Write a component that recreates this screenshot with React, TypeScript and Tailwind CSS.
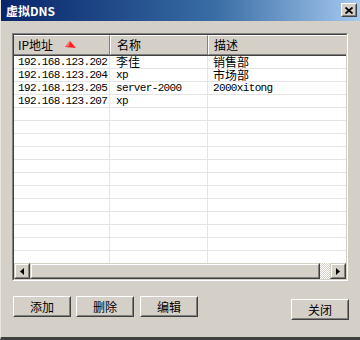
import React from "react";

const rows = [
  ["192.168.123.202", "李佳", "销售部"],
  ["192.168.123.204", "xp", "市场部"],
  ["192.168.123.205", "server-2000", "2000xitong"],
  ["192.168.123.207", "xp", ""],
];

const FONT = { fontFamily: '"Liberation Mono", "Noto Sans CJK SC", monospace' };
const CJK = { fontFamily: '"Noto Sans CJK SC", "Liberation Sans", sans-serif' };

function Cell({ text }: { text: string }) {
  const isCjk = /[\u4e00-\u9fff]/.test(text);
  return (
    <div className="flex-1 h-full flex items-center whitespace-nowrap">
      {isCjk ? (
        <span className="text-[12px] leading-[12px] text-black" style={CJK}>{text}</span>
      ) : (
        <span className="text-[11px] tracking-[-0.65px] leading-[12px] text-black" style={FONT}>{text}</span>
      )}
    </div>
  );
}

function Btn({ label, extra }: { label: string; extra?: string }) {
  return (
    <div className={`w-[58px] h-[21px] border border-t-white border-l-white border-b-[#404040] border-r-[#404040] ${extra ?? ""}`}>
      <div className="w-full h-full border border-t-[#d4d0c8] border-l-[#d4d0c8] border-b-[#808080] border-r-[#808080] flex items-center justify-center">
        <span className="text-[12px] leading-none text-black" style={CJK}>{label}</span>
      </div>
    </div>
  );
}

function ScrollBtn({ dir }: { dir: "l" | "r" }) {
  return (
    <div className="w-[16px] h-full border border-t-[#d4d0c8] border-l-[#d4d0c8] border-b-[#404040] border-r-[#404040]">
      <div className="w-full h-full border border-t-white border-l-white border-b-[#808080] border-r-[#808080] flex items-center justify-center">
        <svg width="4" height="7" viewBox="0 0 4 7">
          {dir === "l" ? <path d="M4 0 L0 3.5 L4 7 Z" fill="#000" /> : <path d="M0 0 L4 3.5 L0 7 Z" fill="#000" />}
        </svg>
      </div>
    </div>
  );
}

export default function App() {
  const bodyRows = [...rows, ...Array.from({ length: 14 }, () => ["", "", ""])];
  return (
    <div className="w-[360px] h-[340px] bg-[#d4d0c8] flex flex-col overflow-hidden border-b-[3px] border-b-[#404040] border-l border-l-[#e8e6e0]">
      {/* title bar */}
      <div className="h-[21px] shrink-0 bg-linear-to-r from-[#0a246a] via-[#3a6ea5] via-60% to-[#a6caf0] flex items-center pl-[5px] pr-[3px]">
        <span className="text-white font-bold text-[12px] leading-none" style={CJK}>虚拟DNS</span>
        <div className="ml-auto w-[16px] h-[14px] mb-[1px] border border-t-white border-l-white border-b-[#404040] border-r-[#404040] bg-[#d4d0c8]">
          <div className="w-full h-full border border-t-[#d4d0c8] border-l-[#d4d0c8] border-b-[#808080] border-r-[#808080] flex items-center justify-center">
            <svg width="8" height="7" viewBox="0 0 8 7">
              <path d="M0.5 0.5 L7.5 6.5 M7.5 0.5 L0.5 6.5" stroke="#000" strokeWidth="1.8" />
            </svg>
          </div>
        </div>
      </div>

      <div className="flex-1 flex flex-col px-[11px] pt-[12px]">
        {/* list view */}
        <div className="w-[336px] h-[248px] border border-t-[#808080] border-l-[#808080] border-b-white border-r-white">
          <div className="w-full h-full border border-t-[#404040] border-l-[#404040] border-b-[#d4d0c8] border-r-[#d4d0c8] flex flex-col bg-white">
            {/* header */}
            <div className="h-[21px] shrink-0 flex bg-[#d4d0c8] border-b border-b-[#404040]">
              <div className="w-[96px] h-full flex items-center pl-[4px] border-t border-t-white border-r border-r-[#808080] border-b border-b-[#808080] relative">
                <span className="text-[12px] leading-none text-black" style={CJK}>IP地址</span>
                <svg className="absolute left-[51px] top-[5px]" width="11" height="8" viewBox="0 0 11 8">
                  <path d="M5 0 L11 7 L0 6 Z" fill="#ff2020" />
                  <path d="M5 0 L0 6 L4 5 Z" fill="#ff7070" />
                </svg>
              </div>
              <div className="w-[98px] h-full flex items-center pl-[6px] border-t border-t-white border-l border-l-white border-r border-r-[#808080] border-b border-b-[#808080]">
                <span className="text-[12px] leading-none text-black" style={CJK}>名称</span>
              </div>
              <div className="flex-1 h-full flex items-center pl-[5px] border-t border-t-white border-l border-l-white border-b border-b-[#808080]">
                <span className="text-[12px] leading-none text-black" style={CJK}>描述</span>
              </div>
            </div>
            {/* body */}
            <div className="flex-1 overflow-hidden flex flex-col">
              {bodyRows.map((r, i) => (
                <div key={i} className="h-[13px] shrink-0 flex border-b border-b-[#e4e4e4]">
                  <div className="w-[96px] h-full pl-[4px] flex border-r border-[#e4e4e4]">
                    <Cell text={r[0]} />
                  </div>
                  <div className="w-[98px] h-full pl-[6px] flex border-r border-[#e4e4e4]">
                    <Cell text={r[1]} />
                  </div>
                  <div className="flex-1 h-full pl-[5px] flex">
                    <Cell text={r[2]} />
                  </div>
                </div>
              ))}
            </div>
            {/* horizontal scrollbar */}
            <div className="h-[16px] shrink-0 flex bg-[#d4d0c8]">
              <ScrollBtn dir="l" />
              <div className="flex-1 h-full border border-t-[#d4d0c8] border-l-[#d4d0c8] border-b-[#404040] border-r-[#404040]">
                <div className="w-full h-full border border-t-white border-l-white border-b-[#808080] border-r-[#808080]" />
              </div>
              <div className="w-[10px] h-full bg-[repeating-conic-gradient(#ffffff_0_25%,#d4d0c8_0_50%)] bg-size-[2px_2px]" />
              <ScrollBtn dir="r" />
            </div>
          </div>
        </div>

        {/* buttons */}
        <div className="flex items-start mt-[15px] pl-[1px]">
          <Btn label="添加" />
          <Btn label="删除" extra="ml-[5px]" />
          <Btn label="编辑" extra="ml-[6px]" />
          <Btn label="关闭" extra="ml-auto mt-[3px]" />
        </div>
      </div>
    </div>
  );
}
